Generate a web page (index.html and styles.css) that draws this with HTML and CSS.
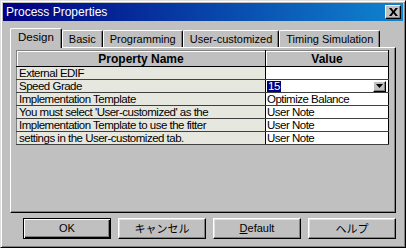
FILE: index.html
```html
<!DOCTYPE html>
<html lang="ja">
<head>
    <meta charset="UTF-8">
    <title>Process Properties</title>
    <link rel="stylesheet" href="styles.css">
</head>
<body>
    <div class="window">
        <div class="titlebar">
            <span class="title">Process Properties</span>
            <button class="close">
                <svg width="9" height="8" viewBox="0 0 9 8"><path d="M0 0h2.5l2 2.7L6.5 0H9L5.8 4 9 8H6.5l-2-2.7-2 2.7H0l3.2-4z" fill="#000"/></svg>
            </button>
        </div>
        <div class="content">
            <div class="tabs">
                <div class="tab active">Design</div>
                <div class="tab">Basic</div>
                <div class="tab">Programming</div>
                <div class="tab">User-customized</div>
                <div class="tab">Timing Simulation</div>
            </div>
            <div class="panel">
                <table class="props">
                    <thead>
                        <tr><th class="name">Property Name</th><th class="value">Value</th></tr>
                    </thead>
                    <tbody>
                        <tr><td class="name">External EDIF</td><td class="value"></td></tr>
                        <tr>
                            <td class="name">Speed Grade</td>
                            <td class="value">
                                <div class="combo">
                                    <span class="selected">15</span>
                                    <span class="drop"><svg width="7" height="4" viewBox="0 0 7 4"><path d="M0 0h7L3.5 4z" fill="#000"/></svg></span>
                                </div>
                            </td>
                        </tr>
                        <tr><td class="name">Implementation Template</td><td class="value">Optimize Balance</td></tr>
                        <tr><td class="name">You must select 'User-customized' as the</td><td class="value">User Note</td></tr>
                        <tr><td class="name">Implementation Template to use the fitter</td><td class="value">User Note</td></tr>
                        <tr><td class="name">settings in the User-customized tab.</td><td class="value">User Note</td></tr>
                    </tbody>
                </table>
            </div>
            <div class="buttons">
                <button class="btn default">OK</button>
                <button class="btn">キャンセル</button>
                <button class="btn"><u>D</u>efault</button>
                <button class="btn">ヘルプ</button>
            </div>
        </div>
    </div>
</body>
</html>
```

FILE: styles.css
```css
body {
    margin: 0;
    background-color: #c0c0c0;
    font-family: "Liberation Sans", Arial, "Noto Sans CJK JP", sans-serif;
    font-size: 11px;
    color: #000;
}

.window {
    width: 406px;
    height: 248px;
    box-sizing: border-box;
    background-color: #c0c0c0;
    border: 1px solid;
    border-color: #dfdfdf #000 #000 #dfdfdf;
    box-shadow: inset 1px 1px #fff, inset -1px -1px #808080;
    padding: 2px;
    display: flex;
    flex-direction: column;
}

.titlebar {
    height: 18px;
    display: flex;
    align-items: center;
    justify-content: space-between;
    padding: 0 2px 0 3px;
    background: linear-gradient(to right, #000080, #1084d0);
    color: #fff;
}

.title {
    font-size: 12px;
}

.close {
    width: 16px;
    height: 14px;
    padding: 0;
    box-sizing: border-box;
    background-color: #c0c0c0;
    border: 1px solid;
    border-color: #fff #000 #000 #fff;
    box-shadow: inset -1px -1px #808080;
    display: flex;
    align-items: center;
    justify-content: center;
}

.content {
    flex: 1;
    padding: 7px 7px 0 7px;
}

/* tabs */
.tabs {
    display: flex;
    align-items: flex-end;
    height: 19px;
}

.tab {
    height: 17px;
    box-sizing: border-box;
    padding: 1px 6px 0 6px;
    border: 1px solid;
    border-bottom: none;
    border-color: #fff #000 #fff #fff;
    border-radius: 2px 2px 0 0;
    box-shadow: inset -1px 0 #808080;
    line-height: 14px;
    white-space: nowrap;
}

.tab.active {
    height: 20px;
    margin-bottom: -1px;
    padding: 1px 7px 0 7px;
    position: relative;
    z-index: 1;
    background-color: #c0c0c0;
    font-size: 11.5px;
}

.panel {
    height: 166px;
    box-sizing: border-box;
    border: 1px solid;
    border-color: #fff #000 #000 #fff;
    box-shadow: inset -1px -1px #808080;
    padding: 2px 0 0 5px;
}

/* property grid */
.props {
    width: 373px;
    border-collapse: collapse;
    table-layout: fixed;
    font-size: 11.5px;
    letter-spacing: -0.5px;
}

.props th {
    height: 15px;
    padding: 0;
    background-color: #c0c0c0;
    font-size: 12px;
    font-weight: bold;
    letter-spacing: 0;
    border-top: 1px solid #808080;
    border-bottom: 1px solid #000;
    border-right: 1px solid #000;
    box-shadow: inset 1px 1px #fff;
}

.props th.name {
    width: 248px;
    border-left: 1px solid #808080;
}

.props td {
    height: 12px;
    padding: 0 0 0 2px;
    line-height: 12px;
    white-space: nowrap;
    overflow: hidden;
    border-bottom: 1px solid #404040;
    border-right: 1px solid #000;
}

.props td.name {
    background-color: #e6e8e0;
    border-left: 1px solid #808080;
}

.props td.value {
    background-color: #fff;
    padding-left: 1px;
}

.combo {
    display: flex;
    justify-content: space-between;
    align-items: center;
    padding-right: 2px;
}

.selected {
    background-color: #000080;
    color: #fff;
    padding: 0 1px;
    line-height: 11px;
}

.drop {
    width: 13px;
    height: 11px;
    box-sizing: border-box;
    background-color: #c0c0c0;
    border: 1px solid;
    border-color: #fff #000 #000 #fff;
    box-shadow: inset -1px -1px #808080;
    display: flex;
    align-items: center;
    justify-content: center;
}

/* dialog buttons */
.buttons {
    display: flex;
    justify-content: flex-end;
    gap: 7px;
    margin-top: 5px;
}

.btn {
    width: 88px;
    height: 21px;
    padding: 0 0 1px 0;
    box-sizing: border-box;
    background-color: #c0c0c0;
    border: 1px solid;
    border-color: #fff #000 #000 #fff;
    box-shadow: inset -1px -1px #808080, inset 1px 1px #dfdfdf;
    font-family: inherit;
    font-size: 11px;
    color: #000;
}

.btn.default {
    border-color: #000;
    box-shadow: inset 1px 1px #fff, inset -1px -1px #000, inset -2px -2px #808080;
}
```
